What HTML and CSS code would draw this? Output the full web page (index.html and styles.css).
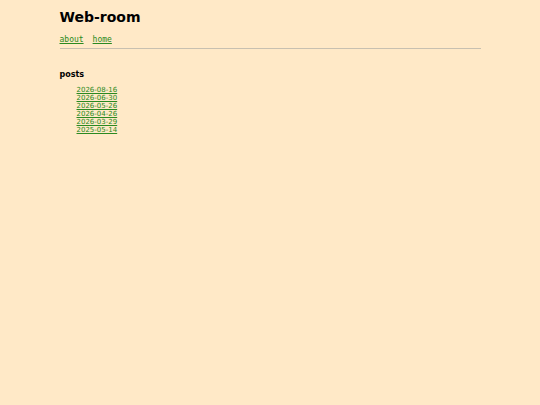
FILE: index.html
```html
<!DOCTYPE html>
<html>
<head>
<meta charset="utf-8">
<link rel="stylesheet" href="styles.css">
</head>
<body>
<div class="page">
  <header class="header">
    <h1 class="title">Web-room</h1>
    <nav class="nav">
      <a href="#" class="nav-link">about</a>
      <a href="#" class="nav-link">home</a>
    </nav>
  </header>
  <main class="content">
    <h2 class="section-title">posts</h2>
    <ul class="posts">
      <li><a href="#" class="post-link">2026-08-16</a></li>
      <li><a href="#" class="post-link">2026-06-30</a></li>
      <li><a href="#" class="post-link">2026-05-26</a></li>
      <li><a href="#" class="post-link">2026-04-26</a></li>
      <li><a href="#" class="post-link">2026-03-29</a></li>
      <li><a href="#" class="post-link">2025-05-14</a></li>
    </ul>
  </main>
</div>
</body>
</html>
```
FILE: styles.css
```css
html, body {
  margin: 0;
  padding: 0;
  background: #ffe9c7;
}
body {
  font-family: "DejaVu Sans", sans-serif;
  color: #000;
}
.page {
  width: 421px;
  margin: 0 auto;
}
.header {
  padding-top: 8px;
  border-bottom: 1px solid #c8c0b0;
}
.title {
  margin: 0;
  font-size: 14px;
  font-weight: bold;
  line-height: 18px;
}
.nav {
  display: flex;
  gap: 9px;
  margin-top: 8px;
  padding-bottom: 2px;
  font-family: "DejaVu Sans Mono", monospace;
  font-size: 8px;
  line-height: 12px;
}
.nav-link {
  color: #2a8a20;
}
.content {
  padding-top: 20px;
}
.section-title {
  margin: 0 0 5px 0;
  font-size: 8px;
  font-weight: bold;
  line-height: 12px;
}
.posts {
  list-style: none;
  margin: 0;
  padding-left: 17px;
  font-size: 7px;
  line-height: 8px;
}
.post-link {
  color: #2a8a20;
}
```
